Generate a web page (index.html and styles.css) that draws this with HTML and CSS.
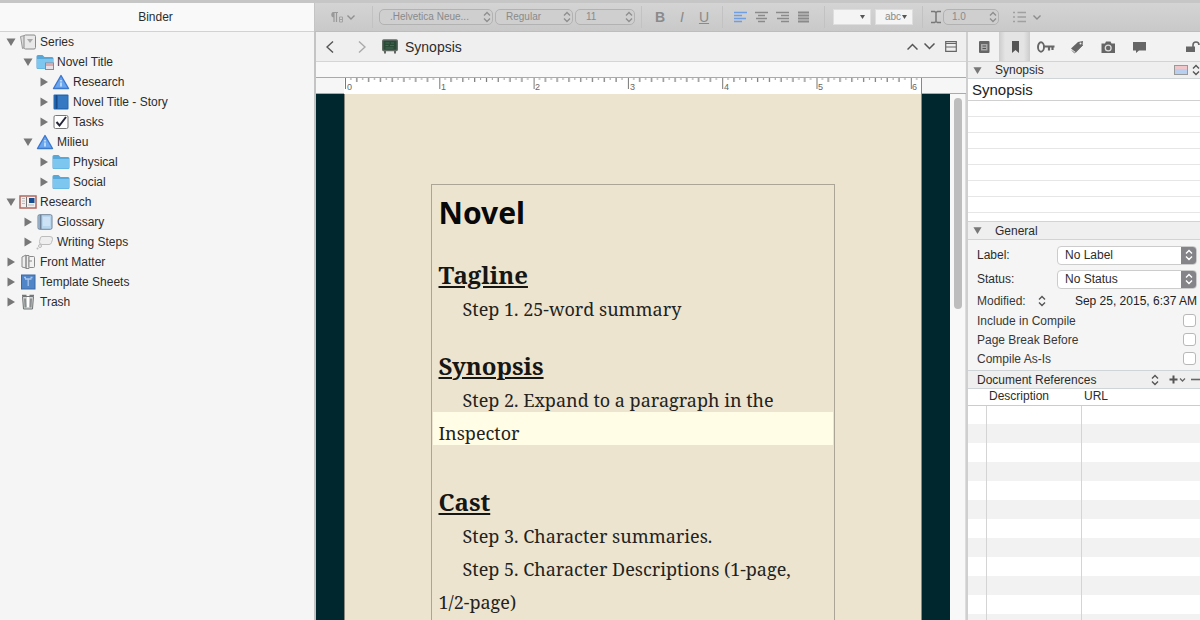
FILE: index.html
```html
<!DOCTYPE html>
<html lang="en">
<head>
<meta charset="utf-8">
<title>Synopsis</title>
<link rel="stylesheet" href="styles.css">
</head>
<body>
<svg class="defs" aria-hidden="true">
  <symbol id="open" viewBox="0 0 10 10"><path d="M0.5 1.5h9L5 9z" fill="#777"/></symbol>
  <symbol id="shut" viewBox="0 0 10 10"><path d="M1.5 0.5v9L9 5z" fill="#777"/></symbol>
  <symbol id="updown" viewBox="0 0 8 12"><path d="M1 4.5L4 1.5l3 3M1 7.500l3 3 3-3" fill="none" stroke="currentColor" stroke-width="1.4"/></symbol>
  <symbol id="folder" viewBox="0 0 18 16"><path d="M0.500 2.500Q0.500 1 2 1H6.500l2 2h7.500Q17.500 3 17.500 4.500V13.500Q17.500 15 16 15H2Q0.500 15 0.500 13.500z" fill="#57a8d8"/><path d="M1 5h16v8.500q0 1-1 1H2q-1 0-1-1z" fill="#7cc6ef"/></symbol>
  <symbol id="tri" viewBox="0 0 18 16"><path d="M9 1.500L16.500 14.500h-15z" fill="#69a6ee" stroke="#3d78cf" stroke-width="1.400" stroke-linejoin="round"/><path d="M9 6v1.500M9 8.500v4" stroke="#d8e9ff" stroke-width="1.500"/></symbol>
</svg>
<div class="window">
  <div class="titlestrip"></div>
  <div class="main">
    <aside class="binder">
      <h2 class="binder-title">Binder</h2>
      <ul class="tree">
        <li class="node"><button class="twist" aria-label="Collapse Series"><svg><use href="#open"/></svg></button><svg class="ico" viewBox="0 0 18 16"><path d="M1.500 2.500l4-1v12l-2 1z" fill="#ddd" stroke="#999"/><rect x="5" y="1" width="11.500" height="14" rx="1.500" fill="#e9e9e9" stroke="#8a8a8a"/><path d="M8 5h6l-3 4z" fill="#aaa"/></svg>Series</li>
        <li class="node l1"><button class="twist" aria-label="Collapse Novel Title"><svg><use href="#open"/></svg></button><svg class="ico" viewBox="0 0 18 16"><use href="#folder"/><rect x="9.500" y="9" width="8" height="6.500" fill="#e6e0e8" stroke="#8f8793"/><path d="M10 11h7" stroke="#c77"/></svg>Novel Title</li>
        <li class="node l2"><button class="twist" aria-label="Expand Research"><svg><use href="#shut"/></svg></button><svg class="ico"><use href="#tri"/></svg>Research</li>
        <li class="node l2"><button class="twist" aria-label="Expand Novel Title - Story"><svg><use href="#shut"/></svg></button><svg class="ico" viewBox="0 0 18 16"><rect x="1.500" y="0.500" width="15" height="15" rx="1" fill="#2369b3"/><path d="M4.500 1v14" stroke="#174b8b" stroke-width="1.500"/><path d="M6 2h9.500v12H6z" fill="#3479c2"/></svg>Novel Title - Story</li>
        <li class="node l2"><button class="twist" aria-label="Expand Tasks"><svg><use href="#shut"/></svg></button><svg class="ico" viewBox="0 0 18 16"><rect x="2" y="1.500" width="14" height="13" rx="1.500" fill="#fff" stroke="#777"/><path d="M4.500 8l3 3.500L14 3" fill="none" stroke="#26263a" stroke-width="2"/></svg>Tasks</li>
        <li class="node l1"><button class="twist" aria-label="Collapse Milieu"><svg><use href="#open"/></svg></button><svg class="ico"><use href="#tri"/></svg>Milieu</li>
        <li class="node l2"><button class="twist" aria-label="Expand Physical"><svg><use href="#shut"/></svg></button><svg class="ico"><use href="#folder"/></svg>Physical</li>
        <li class="node l2"><button class="twist" aria-label="Expand Social"><svg><use href="#shut"/></svg></button><svg class="ico"><use href="#folder"/></svg>Social</li>
        <li class="node"><button class="twist" aria-label="Collapse Research"><svg><use href="#open"/></svg></button><svg class="ico" viewBox="0 0 18 16"><rect x="1" y="2" width="16" height="12" fill="#f4eeee" stroke="#b0685e" stroke-width="1.500"/><path d="M3 4.500h3M3 7h3M3 9.500h3M9 11h6" stroke="#bbb"/><path d="M7.500 3v10" stroke="#777"/><rect x="10" y="4" width="5.500" height="5" fill="#174d91"/></svg>Research</li>
        <li class="node l1"><button class="twist" aria-label="Expand Glossary"><svg><use href="#shut"/></svg></button><svg class="ico" viewBox="0 0 18 16"><rect x="2" y="0.700" width="14" height="14.600" rx="1.500" fill="#b9d6ef" stroke="#71849a"/><path d="M4.500 1v14" stroke="#71849a" stroke-width="2"/><path d="M7 3h7v9H7z" fill="#cde2f5"/></svg>Glossary</li>
        <li class="node l1"><button class="twist" aria-label="Expand Writing Steps"><svg><use href="#shut"/></svg></button><svg class="ico" viewBox="0 0 18 16"><path d="M6 2.500h8q3 0 2.500 3l-1 3q-.5 2-2.500 2H6q-3 0-2.500-3l.5-2q.3-3 2-3z" fill="#eee" stroke="#bcbcbc"/><circle cx="4" cy="12" r="1.500" fill="#eee" stroke="#bbb"/><circle cx="1.500" cy="14.500" r="1" fill="#bbb"/></svg>Writing Steps</li>
        <li class="node"><button class="twist" aria-label="Expand Front Matter"><svg><use href="#shut"/></svg></button><svg class="ico" viewBox="0 0 18 16"><path d="M3 3l4-2v13l-4-1zM7 1.500h3v13H7z" fill="#eee" stroke="#8a8a8a"/><rect x="10" y="2.500" width="5.500" height="11" rx="1" fill="#f2f2f2" stroke="#8a8a8a"/><path d="M10 7h3" stroke="#888"/></svg>Front Matter</li>
        <li class="node"><button class="twist" aria-label="Expand Template Sheets"><svg><use href="#shut"/></svg></button><svg class="ico" viewBox="0 0 18 16"><rect x="2.500" y="1" width="13.500" height="14" fill="#5085c8" stroke="#3a68a6"/><path d="M6 5h6.500M9.200 5v7M5 3.500h2M11.500 3.500h2" stroke="#a8c5e9" stroke-width="1.300"/></svg>Template Sheets</li>
        <li class="node"><button class="twist" aria-label="Expand Trash"><svg><use href="#shut"/></svg></button><svg class="ico" viewBox="0 0 18 16"><path d="M3.500 2.500h11l-1 12.500h-9z" fill="#d3d5d5" stroke="#707474"/><path d="M3 1.500h4.500M10.500 1.500H15" stroke="#777" stroke-width="1.500"/><path d="M6 4.500l.5 9M12 4.500l-.5 9" stroke="#8a8e8e" stroke-width="2"/><path d="M9 3v10" stroke="#fff" stroke-width="2"/></svg>Trash</li>
      </ul>
    </aside>

    <div class="work">
      <div class="toolbar">
        <div class="tg tg-para"><button class="tb" aria-label="Styles"><svg width="28" height="14" viewBox="0 0 28 14"><path d="M6 2.500v9.500M8.500 2.500v9.500M10 2.500H4.500" stroke="#999" stroke-width="1.200"/><path d="M6 2a2.500 2.500 0 000 5.500z" fill="#999"/><path d="M11.500 7h3v5h-3zM11.500 9.500h3" fill="none" stroke="#a2a2a2"/><path d="M19.500 5.500l3.500 3.500 3.500-3.500" fill="none" stroke="#909090" stroke-width="1.400"/></svg></button></div>
        <div class="tg tg-font">
          <span class="pick p-family"><select aria-label="Font family"><option>.Helvetica Neue...</option></select><svg><use href="#updown"/></svg></span>
          <span class="pick p-face"><select aria-label="Typeface"><option>Regular</option></select><svg><use href="#updown"/></svg></span>
          <span class="pick p-size"><select aria-label="Font size"><option>11</option></select><svg><use href="#updown"/></svg></span>
        </div>
        <div class="tg tg-biu"><button class="tb b">B</button><button class="tb i">I</button><button class="tb u">U</button></div>
        <div class="tg tg-align">
          <button class="tb on" aria-label="Align left"><svg width="13" height="12" viewBox="0 0 13 12"><path d="M0 1.500h13M0 4.500h8M0 7.500h12M0 10.500h8" stroke="currentColor" stroke-width="1.500"/></svg></button>
          <button class="tb" aria-label="Center"><svg width="13" height="12" viewBox="0 0 13 12"><path d="M0 1.500h13M3 4.500h7M1 7.500h11M3 10.500h7" stroke="currentColor" stroke-width="1.500"/></svg></button>
          <button class="tb" aria-label="Align right"><svg width="13" height="12" viewBox="0 0 13 12"><path d="M0 1.500h13M5 4.500h8M1 7.500h12M5 10.500h8" stroke="currentColor" stroke-width="1.500"/></svg></button>
          <button class="tb" aria-label="Justify"><svg width="13" height="12" viewBox="0 0 13 12"><path d="M1 1.500h11M1 4.500h11M1 7.500h11M1 10.500h11" stroke="currentColor" stroke-width="1.800"/></svg></button>
        </div>
        <div class="tg tg-color"><button class="well" aria-label="Text color"><span class="swatch"></span><svg width="5" height="4" viewBox="0 0 5 4"><path d="M0 0h5L2.500 4z" fill="#555"/></svg></button><button class="well"><span class="swatch">abc</span><svg width="5" height="4" viewBox="0 0 5 4"><path d="M0 0h5L2.500 4z" fill="#555"/></svg></button></div>
        <div class="tg tg-space">
          <svg width="14" height="14" viewBox="0 0 14 14"><path d="M2 1.500h3.500L7 2.500l1.500-1H12M2 12.500h3.500L7 11.500l1.500 1H12M7 2v10" fill="none" stroke="#777" stroke-width="1.500"/></svg>
          <span class="pick p-line"><select aria-label="Line spacing"><option>1.0</option></select><svg><use href="#updown"/></svg></span>
          <button class="tb list" aria-label="Lists"><svg width="28" height="12" viewBox="0 0 28 12"><path d="M0 1.500h2M0 6h2M0 10.500h2M4.500 1.500H13M4.500 6H13M4.500 10.500H13" stroke="#a0a0a0" stroke-width="1.300"/><path d="M20.500 4.500L24 8l3.500-3.500" fill="none" stroke="#8c8c8c" stroke-width="1.400"/></svg></button>
        </div>
      </div>

      <div class="panes">
        <main class="editor">
          <header class="edhead">
            <button class="nav" aria-label="Back"><svg width="8" height="12" viewBox="0 0 8 12"><path d="M7 0.500L1 6l6 5.500" fill="none" stroke="#555" stroke-width="1.400"/></svg></button>
            <button class="nav" aria-label="Forward"><svg width="8" height="12" viewBox="0 0 8 12"><path d="M1 0.500L7 6l-6 5.500" fill="none" stroke="#aaa" stroke-width="1.400"/></svg></button>
            <svg class="board" viewBox="0 0 16 15"><rect x="0.700" y="1" width="14.600" height="10.500" rx="1" fill="#294b36" stroke="#626c65" stroke-width="1.400"/><path d="M3.500 4h4M9 4h3M3.500 6.500h3M8 6.500h4M3.500 9h8" stroke="#446b50"/><path d="M3 12v2.500M13 12v2.500" stroke="#666" stroke-width="2"/></svg>
            <h1 class="doc-title">Synopsis</h1>
            <span class="grow"></span>
            <button class="hb" aria-label="Previous document"><svg width="11" height="7" viewBox="0 0 11 7"><path d="M0.500 6.500l5-5 5 5" fill="none" stroke="#555" stroke-width="1.500"/></svg></button>
            <button class="hb" aria-label="Next document"><svg width="11" height="7" viewBox="0 0 11 7"><path d="M0.500 0.500l5 5 5-5" fill="none" stroke="#555" stroke-width="1.500"/></svg></button>
            <button class="hb split" aria-label="Split editor"><svg width="12" height="11" viewBox="0 0 12 11"><path d="M0.700 0.700h10.600v9.600H0.700zM1 2.500h10M1 6h10" fill="none" stroke="#666" stroke-width="1.200"/></svg></button>
          </header>
          <div class="band"></div>
          <div class="rulerbar">
            <svg class="ruler" viewBox="0 0 577 16">
              <defs><pattern id="ticks" x="1" y="0" width="94.300" height="16" patternUnits="userSpaceOnUse"><path d="M0.500 0v11" stroke="#777"/><path d="M11.800 0v4M23.600 0v4M35.400 0v4M47.200 0v4M58.900 0v4M70.700 0v4M82.500 0v4" stroke="#777" stroke-width="1.200"/><path d="M5.900 0v2M17.700 0v2M29.500 0v2M41.300 0v2M53 0v2M64.800 0v2M76.600 0v2M88.400 0v2" stroke="#999"/></pattern></defs>
              <rect width="577" height="16" fill="#fff"/><rect width="577" height="16" fill="url(#ticks)"/>
              <g class="nums"><text x="3" y="12">0</text><text x="97" y="12">1</text><text x="191" y="12">2</text><text x="286" y="12">3</text><text x="380" y="12">4</text><text x="474" y="12">5</text><text x="568" y="12">6</text></g>
            </svg>
          </div>
          <div class="scroller">
            <div class="canvas">
              <article class="page">
                <div class="frame">
                  <h2 class="t-novel">Novel</h2>
                  <h3 class="t-sec">Tagline</h3>
                  <p class="para">Step 1. 25-word summary</p>
                  <h3 class="t-sec">Synopsis</h3>
                  <p class="para">Step 2. Expand to a paragraph in the <span class="current">Inspector</span></p>
                  <h3 class="t-sec t-cast">Cast</h3>
                  <p class="para">Step 3. Character summaries.</p>
                  <p class="para">Step 5. Character Descriptions (1-page, <span class="keep">1/2-page)</span></p>
                </div>
              </article>
            </div>
            <div class="track"><div class="thumb"></div></div>
          </div>
        </main>

        <aside class="inspector">
          <nav class="tabs">
            <button class="tab" aria-label="Notes"><svg viewBox="0 0 18 14"><rect x="4" y="1" width="10.500" height="12" rx="1" fill="#666"/><path d="M6 4h6.500v6.500H6z" fill="#aaa"/><path d="M7.500 6h3.500M7.500 8.500h3.500" stroke="#555"/></svg></button>
            <button class="tab sel" aria-label="References"><svg viewBox="0 0 18 14"><path d="M6 1h7v12L9.500 10 6 13z" fill="#555"/></svg></button>
            <button class="tab" aria-label="Keywords"><svg viewBox="0 0 18 14"><ellipse cx="4" cy="7" rx="3" ry="4.700" fill="none" stroke="#666" stroke-width="1.900"/><path d="M7 6.500h10.500M12 7v3.500M15.500 7v3" fill="none" stroke="#666" stroke-width="2.200"/></svg></button>
            <button class="tab" aria-label="Metadata"><svg viewBox="0 0 18 14"><path d="M3 8.500L10 2l5-1-.5 4.500L8 12.500z" fill="#666"/><path d="M4 10.500l2.500 2.500L15 5" fill="none" stroke="#777"/><circle cx="12.500" cy="3.500" r="1" fill="#eee"/></svg></button>
            <button class="tab" aria-label="Snapshots"><svg viewBox="0 0 18 14"><path d="M2.500 3.500H6L7 1.500h4.500l1 2H16v9.500H2.500z" fill="#666"/><circle cx="9.200" cy="8" r="2.900" fill="none" stroke="#ddd" stroke-width="1.300"/></svg></button>
            <button class="tab" aria-label="Comments"><svg viewBox="0 0 18 14"><path d="M3 2h13v8.500H9L6 13v-2.500H3z" fill="#666"/></svg></button>
            <span class="grow"></span>
            <button class="tab lock" aria-label="Lock inspector"><svg viewBox="0 0 18 14"><rect x="4" y="6.500" width="9" height="5.500" fill="#666"/><path d="M11 7V5q0-3 3-3t3 3" fill="none" stroke="#666" stroke-width="1.600"/></svg></button>
          </nav>
          <section class="syn">
            <header class="sec"><svg class="tw"><use href="#open"/></svg><h3>Synopsis</h3><span class="grow"></span><svg class="card" viewBox="0 0 14 10"><rect x="0.500" y="0.500" width="13" height="9" fill="#b8cff0" stroke="#999"/><path d="M1 1h12v3H1z" fill="#efc7cb"/></svg><svg class="ud"><use href="#updown"/></svg></header>
            <input class="syn-title" aria-label="Synopsis title" value="Synopsis">
            <textarea class="syn-body" aria-label="Synopsis text"></textarea>
          </section>
          <section class="gen">
            <header class="sec top"><svg class="tw"><use href="#open"/></svg><h3>General</h3></header>
            <div class="genbody">
              <div class="field"><label for="lab">Label:</label><span class="drop"><select id="lab"><option>No Label</option></select><span class="cap"><svg><use href="#updown"/></svg></span></span></div>
              <div class="field"><label for="sta">Status:</label><span class="drop"><select id="sta"><option>No Status</option></select><span class="cap"><svg><use href="#updown"/></svg></span></span></div>
              <div class="mod"><span>Modified:</span><svg class="ud"><use href="#updown"/></svg><span class="grow"></span><span class="date">Sep 25, 2015, 6:37 AM</span></div>
              <label class="check">Include in Compile<input type="checkbox"></label>
              <label class="check">Page Break Before<input type="checkbox"></label>
              <label class="check">Compile As-Is<input type="checkbox"></label>
            </div>
          </section>
          <section class="refs">
            <header class="sec top refhead"><h3>Document References</h3><span class="grow"></span><svg class="ud"><use href="#updown"/></svg><button class="add" aria-label="Add reference"><svg width="17" height="9" viewBox="0 0 17 9"><path d="M0.500 4.500h8M4.500 0.500v8" stroke="#555" stroke-width="2"/><path d="M11 3.500l2.500 2.500L16 3.500" fill="none" stroke="#666" stroke-width="1.300"/></svg></button><button class="add" aria-label="Remove reference"><svg width="9" height="9" viewBox="0 0 9 9"><path d="M0 4.500h9" stroke="#666" stroke-width="1.600"/></svg></button></header>
            <table class="reftable">
              <thead><tr><th class="c0"></th><th class="c1">Description</th><th>URL</th></tr></thead>
              <tbody>
                <tr><td></td><td></td><td></td></tr><tr><td></td><td></td><td></td></tr><tr><td></td><td></td><td></td></tr><tr><td></td><td></td><td></td></tr>
                <tr><td></td><td></td><td></td></tr><tr><td></td><td></td><td></td></tr><tr><td></td><td></td><td></td></tr><tr><td></td><td></td><td></td></tr>
                <tr><td></td><td></td><td></td></tr><tr><td></td><td></td><td></td></tr><tr><td></td><td></td><td></td></tr><tr><td></td><td></td><td></td></tr>
              </tbody>
            </table>
          </section>
        </aside>
      </div>
    </div>
  </div>
</div>
</body>
</html>
```

FILE: styles.css
```css
* { box-sizing: border-box; }
body { margin: 0; font: 12px/20px "Liberation Sans", Arial, sans-serif; color: #2c2c2c; background: #f5f5f5; }
h1, h2, h3, p, ul { margin: 0; padding: 0; font-weight: normal; font-size: inherit; }
button { border: 0; padding: 0; background: none; font: inherit; color: inherit; display: flex; align-items: center; justify-content: center; }
select, input, textarea { font: inherit; color: inherit; margin: 0; }
svg { display: block; flex: none; }
.defs { position: absolute; width: 0; height: 0; }
.grow { flex: 1; }
.window { display: flex; flex-direction: column; height: 100vh; overflow: hidden; }
.titlestrip { flex: none; height: 3px; background: #c6c6c6; }
.main { flex: 1; display: flex; min-height: 0; }

.binder { flex: none; width: 315px; border-right: 1px solid #c4c4c4; background: #f5f5f5; }
.binder-title { height: 29px; line-height: 28px; padding-right: 3px; text-align: center; border-bottom: 1px solid #d2d2d2; background: #f9f9f9; }
.tree { list-style: none; }
.node { display: flex; align-items: center; height: 20px; padding-left: 6px; white-space: nowrap; }
.node.l1 { padding-left: 23px; }
.node.l2 { padding-left: 39px; }
.twist, .twist svg { width: 10px; height: 10px; }
.ico { width: 18px; height: 16px; margin: 0 3px; }

.work { flex: 1; display: flex; flex-direction: column; min-width: 0; }
.toolbar { flex: none; display: flex; align-items: center; height: 29px; border-bottom: 1px solid #bdbdbd; background: linear-gradient(#d4d4d5, #c9c9ca); color: #8a8a8a; font-size: 10px; overflow: hidden; }
.tg { flex: none; display: flex; align-items: center; height: 22px; border-left: 1px solid #c2c2c2; }
.tg-para { width: 57px; border: 0; padding-left: 13px; }
.tg-font { width: 269px; padding-left: 6px; gap: 2px; }
.tg-biu { width: 81px; justify-content: center; gap: 8px; font-size: 14px; }
.tg-align { width: 102px; padding-left: 11px; gap: 8px; }
.tg-color { width: 98px; padding-left: 8px; gap: 4px; }
.tg-space { padding-left: 6px; }
.tb.b { width: 14px; font-weight: bold; }
.tb.i { width: 14px; font-style: italic; }
.tb.u { width: 14px; text-decoration: underline; }
.tb.on { color: #6f9fe0; }
.tb.list { margin-left: 14px; }
.pick { position: relative; height: 16px; border: 1px solid #b2b2b2; border-radius: 5px; background: #cfcfd0; display: flex; align-items: center; }
.pick select { appearance: none; border: 0; background: none; width: 100%; height: 14px; line-height: 14px; padding: 0 0 0 10px; }
.pick svg { position: absolute; right: 1px; width: 8px; height: 12px; color: #8f8f8f; }
.p-family { width: 114px; }
.p-face { width: 78px; }
.p-size { width: 60px; }
.p-line { width: 56px; }
.p-line select { padding-left: 8px; }
.well { width: 38px; height: 16px; padding: 2px 5px 2px 2px; background: #f4f4f4; border: 1px solid #dedede; justify-content: space-between; }
.swatch { width: 23px; height: 10px; line-height: 10px; text-align: right; }

.panes { flex: 1; display: flex; min-height: 0; }
.editor { flex: 1; display: flex; flex-direction: column; min-width: 0; border-left: 1px solid #c4c4c4; }
.edhead { flex: none; display: flex; align-items: center; height: 30px; padding: 0 9px; background: #efefef; border-bottom: 1px solid #d3d6d8; }
.nav { width: 9px; margin-right: 23px; }
.nav + .nav { margin-right: 16px; }
.board { width: 16px; height: 15px; margin-right: 7px; }
.doc-title { font-size: 14px; }
.hb { margin-right: 6px; }
.split { margin: 0 0 0 4px; }
.band { flex: none; height: 16px; background: #f8f8f8; border-bottom: 1px solid #aaa; }
.rulerbar { flex: none; display: flex; justify-content: center; height: 16px; padding-right: 17px; border-bottom: 1px solid #aaa; background: #f6f6f6; }
.ruler { width: 578px; height: 16px; border-right: 1px solid #888; }
.nums { font-size: 9px; fill: #666; }
.scroller { flex: 1; display: flex; min-height: 0; }
.canvas { flex: 1; display: flex; justify-content: center; padding-right: 1px; background: #00262e; overflow: hidden; }
.page { width: 578px; padding: 90px 86px 0; background: #ece4cf; border: 0 solid #8b897e; border-width: 0 1px; }
.frame { height: 100%; min-height: 480px; padding: 8px 1px 0; border: 1px solid #aaa597; font: 18px/33px "Noto Serif", "Droid Serif", "DejaVu Serif Condensed", "Liberation Serif", serif; color: #222220; }
.t-novel { font: bold 30px/40px "Noto Sans", "Open Sans", sans-serif; color: #080808; padding-left: 6px; margin-bottom: 2px; }
.t-sec { font-size: 24px; font-weight: bold; line-height: 36px; margin-top: 22px; padding-left: 6px; text-decoration: underline; color: #161614; }
.t-novel + .t-sec { margin-top: 24px; }
.para { text-indent: 24px; padding-left: 6px; }
.keep { white-space: nowrap; }
.current { display: block; height: 33px; text-indent: 0; margin: -5px 0 0 -6px; padding: 5px 0 0 6px; background: #fffde6; }
.t-cast { margin-top: 39px; }
.track { flex: none; width: 16px; padding: 4px 3px 0 4px; background: #f8f8f8; border-right: 1px solid #ddd; }
.thumb { width: 8px; height: 211px; border-radius: 4px; background: #bdbdbd; }

.inspector { flex: none; width: 234px; display: flex; flex-direction: column; border-left: 2px solid #cfcfcf; background: #f5f5f5; overflow: hidden; }
.tabs { flex: none; display: flex; height: 30px; border-bottom: 1px solid #d0d4d6; background: #f2f2f2; }
.tab { width: 31px; height: 29px; }
.tab svg { width: 18px; height: 14px; }
.tab.sel { background: linear-gradient(90deg, #ccc, #e4e4e4 20%, #e4e4e4 80%, #ccc); }
.lock { width: 18px; }
.sec { display: flex; align-items: center; height: 17px; padding: 0 0 0 5px; background: #efefef; border-bottom: 1px solid #cfd4d6; }
.sec.top { height: 19px; border-top: 1px solid #cfd4d6; }
.tw { width: 9px; height: 9px; margin-right: 13px; }
.card { width: 14px; height: 10px; margin-right: 4px; }
.ud { width: 8px; height: 12px; color: #555; }
.syn-title { display: block; width: 100%; height: 22px; border: 0; border-bottom: 1px solid #d0d0d0; padding: 0 4px; font-size: 15px; color: #222; background: #fff; }
.syn-body { display: block; width: 100%; height: 120px; border: 0; padding: 0; resize: none; line-height: 16px; background: repeating-linear-gradient(#fff 0 15px, #e6e6e6 15px 16px); }
.genbody { padding: 3px 3px 2px 9px; }
.field { display: flex; align-items: center; justify-content: space-between; height: 24px; }
.drop { display: flex; width: 140px; height: 19px; border: 1px solid #ccc; border-radius: 4px; background: #fff; overflow: hidden; }
.drop select { appearance: none; flex: 1; height: 17px; line-height: 16px; border: 0; background: none; padding: 0 7px; }
.cap { width: 15px; display: flex; align-items: center; justify-content: center; background: #858589; color: #fff; }
.cap svg { width: 8px; height: 12px; }
.mod { display: flex; align-items: center; height: 20px; color: #383838; }
.mod .ud { margin-left: 12px; }
.date { color: #222; }
.check { display: flex; align-items: center; justify-content: space-between; height: 19px; color: #383838; }
.check input { appearance: none; width: 13px; height: 13px; margin-right: 1px; border: 1px solid #b8b8b8; border-radius: 3px; background: #fff; }
.refhead { padding-left: 9px; }
.add { margin-left: 10px; }
.add + .add { margin-left: 5px; }
.reftable { width: 100%; border-collapse: collapse; table-layout: fixed; background: #fff; }
.reftable th { height: 16px; padding: 0 0 0 3px; font-weight: normal; line-height: 15px; text-align: left; border-bottom: 1px solid #ccc; }
.reftable .c0 { width: 18px; }
.reftable .c1 { width: 95px; }
.reftable td { height: 19px; padding: 0; border-right: 1px solid #d4d4d4; }
.reftable td:last-child { border-right: 0; }
.reftable tbody tr:nth-child(even) { background: #f2f2f2; }
```
